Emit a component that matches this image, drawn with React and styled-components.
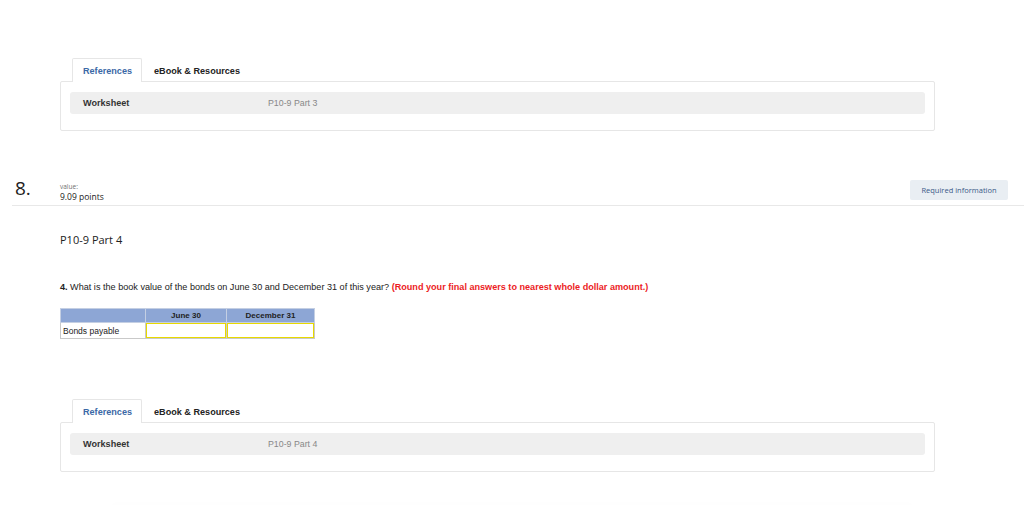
import styled, { createGlobalStyle } from 'styled-components';

const GlobalStyle = createGlobalStyle`
    html, body {
        margin: 0;
        padding: 0;
        background: #fff;
        font-family: "Liberation Sans", Arial, sans-serif;
    }
`;

const ReferenceBlock = ({ part }) => (
    <Refs>
        <Tabs>
            <Tab active>References</Tab>
            <Tab>eBook &amp; Resources</Tab>
        </Tabs>
        <Panel>
            <Bar>
                <BarLabel>Worksheet</BarLabel>
                <BarValue>{part}</BarValue>
            </Bar>
        </Panel>
    </Refs>
);

const App = () => {
    return (
        <>
            <GlobalStyle />
            <Page>
                <ReferenceBlock part="P10-9 Part 3" />
                <QuestionHead>
                    <Number>8.</Number>
                    <Value>
                        <small>value:</small>
                        <span>9.09 points</span>
                    </Value>
                    <ReqBtn>Required information</ReqBtn>
                </QuestionHead>
                <Body>
                    <Title>P10-9 Part 4</Title>
                    <Question>
                        <b>4.</b> What is the book value of the bonds on June 30 and December 31 of this year?{' '}
                        <Red>(Round your final answers to nearest whole dollar amount.)</Red>
                    </Question>
                    <Table>
                        <thead>
                            <tr>
                                <Th $w={84} />
                                <Th $w={80}>June 30</Th>
                                <Th $w={87}>December 31</Th>
                            </tr>
                        </thead>
                        <tbody>
                            <tr>
                                <Td>Bonds payable</Td>
                                <Td $input><Input /></Td>
                                <Td $input><Input /></Td>
                            </tr>
                        </tbody>
                    </Table>
                </Body>
                <ReferenceBlock part="P10-9 Part 4" />
                <Fade />
            </Page>
        </>
    );
};

export default App;

const Page = styled.div`
    padding-top: 58px;
    width: 1024px;
`;

const Refs = styled.div`
    margin-left: 60px;
    width: 875px;
`;

const Tabs = styled.div`
    display: flex;
    padding-left: 12px;
    height: 23px;
    position: relative;
    z-index: 1;
`;

const Tab = styled.div`
    display: flex;
    align-items: center;
    box-sizing: border-box;
    height: 24px;
    padding: ${(p) => (p.active ? '0 9px 0 10px' : '0 11px')};
    font-size: 9.1px;
    font-weight: 700;
    color: ${(p) => (p.active ? '#3b68a6' : '#222')};
    background: ${(p) => (p.active ? '#fff' : 'transparent')};
    border: 1px solid ${(p) => (p.active ? '#e6e6e6' : 'transparent')};
    border-bottom: none;
    border-radius: 2px 2px 0 0;
`;

const Panel = styled.div`
    border: 1px solid #e6e6e6;
    border-radius: 2px;
    padding: 10px 9px 16px;
`;

const Bar = styled.div`
    display: flex;
    align-items: center;
    height: 22px;
    background: #efefef;
    border-radius: 3px;
    padding-left: 13px;
`;

const BarLabel = styled.div`
    width: 185px;
    font-size: 9.1px;
    font-weight: 700;
    color: #333;
`;

const BarValue = styled.div`
    font-size: 8.8px;
    color: #888;
`;

const QuestionHead = styled.div`
    display: flex;
    align-items: flex-start;
    margin: 45px 0 0 12px;
    padding: 0 16px 0 3px;
    border-bottom: 1px solid #e8e8e8;
    height: 29px;
`;

const Number = styled.div`
    font-family: "Open Sans", sans-serif;
    font-size: 19px;
    line-height: 18px;
    margin-top: 3px;
    color: #222;
    width: 45px;
`;

const Value = styled.div`
    display: flex;
    flex-direction: column;
    font-family: "Open Sans", sans-serif;
    color: #222;
    margin-top: 7px;
    small {
        font-size: 6.5px;
        line-height: 8px;
        color: #6f6f6f;
    }
    span {
        font-size: 8.5px;
        line-height: 11px;
    }
`;

const ReqBtn = styled.div`
    margin-left: auto;
    margin-top: 4px;
    width: 98px;
    height: 20px;
    display: flex;
    align-items: center;
    justify-content: center;
    background: #e9eef3;
    border-radius: 2px;
    font-family: "Open Sans", sans-serif;
    font-size: 7.5px;
    color: #3a5988;
`;

const Body = styled.div`
    padding-left: 60px;
    padding-top: 27px;
    height: 166px;
`;

const Title = styled.div`
    font-family: "Open Sans", sans-serif;
    font-size: 11px;
    color: #222;
    line-height: 14px;
`;

const Question = styled.div`
    margin-top: 35px;
    font-size: 9.1px;
    color: #222;
    line-height: 10px;
    white-space: nowrap;
    b {
        font-weight: 700;
    }
`;

const Red = styled.span`
    color: #ec1c24;
    font-weight: 700;
`;

const Table = styled.table`
    margin-top: 16px;
    border-collapse: collapse;
    font-size: 8.5px;
`;

const Th = styled.th`
    width: ${(p) => p.$w}px;
    background: #8da6d5;
    border: 1px solid #c4cfe3;
    height: 13px;
    padding: 0;
    font-weight: 700;
    font-size: 8px;
    color: #222;
`;

const Td = styled.td`
    height: 15px;
    padding: ${(p) => (p.$input ? '0' : '0 0 0 2px')};
    color: #222;
    border: 1px solid #c9c9c9;
    background: #fff;
`;

const Input = styled.div`
    box-sizing: border-box;
    width: 100%;
    height: 15px;
    border: 1px solid #e8d900;
`;

const Fade = styled.div`
    margin: 33px auto 0;
    width: 800px;
    height: 2px;
    box-shadow: 0 0 6px rgba(0, 0, 0, 0.03);
`;
